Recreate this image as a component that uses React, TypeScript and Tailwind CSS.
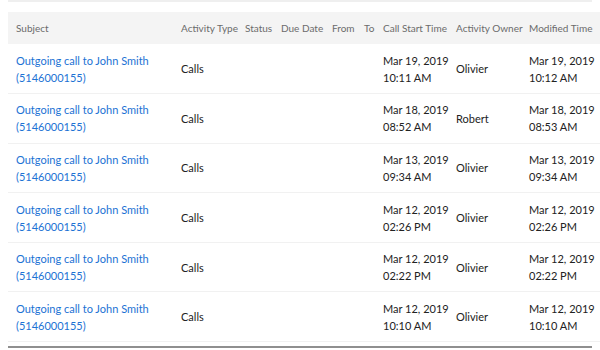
const rows = [
  { start: ["Mar 19, 2019", "10:11 AM"], owner: "Olivier", mod: ["Mar 19, 2019", "10:12 AM"] },
  { start: ["Mar 18, 2019", "08:52 AM"], owner: "Robert", mod: ["Mar 18, 2019", "08:53 AM"] },
  { start: ["Mar 13, 2019", "09:34 AM"], owner: "Olivier", mod: ["Mar 13, 2019", "09:34 AM"] },
  { start: ["Mar 12, 2019", "02:26 PM"], owner: "Olivier", mod: ["Mar 12, 2019", "02:26 PM"] },
  { start: ["Mar 12, 2019", "02:22 PM"], owner: "Olivier", mod: ["Mar 12, 2019", "02:22 PM"] },
  { start: ["Mar 12, 2019", "10:10 AM"], owner: "Olivier", mod: ["Mar 12, 2019", "10:10 AM"] },
];

const cols = [
  { label: "Subject", w: "w-[165px]" },
  { label: "Activity Type", w: "w-[64px]" },
  { label: "Status", w: "w-[36px]" },
  { label: "Due Date", w: "w-[51px]" },
  { label: "From", w: "w-[32px]" },
  { label: "To", w: "w-[19px]" },
  { label: "Call Start Time", w: "w-[73px]" },
  { label: "Activity Owner", w: "w-[73px]" },
  { label: "Modified Time", w: "w-[79px]" },
];

export default function App() {
  return (
    <div className="h-[350px] w-[600px] overflow-hidden bg-white font-['Lato',sans-serif] text-[11px] leading-[17px]">
      <div className="mx-2 h-[2px] bg-[#efefef]" />
      <div className="ml-2 mt-[10px] w-[592px]">
        <table className="w-[592px] table-fixed border-collapse">
          <thead>
            <tr className="h-[32px] bg-[#f4f4f4]">
              {cols.map((c) => (
                <th key={c.label} className={`${c.w} whitespace-nowrap pl-2 text-left text-[10px] font-normal text-[#6b6b6b]`}>
                  {c.label}
                </th>
              ))}
            </tr>
          </thead>
          <tbody>
            {rows.map((r, i) => (
              <tr key={i} className="h-[49.6px] border-b border-[#f1f1f1] text-[#222]">
                <td className="pl-2 text-[#1c72d4]">
                  Outgoing call to John Smith
                  <br />
                  (5146000155)
                </td>
                <td className="pl-2">Calls</td>
                <td />
                <td />
                <td />
                <td />
                <td className="whitespace-nowrap pl-2">
                  {r.start[0]}
                  <br />
                  {r.start[1]}
                </td>
                <td className="pl-2">{r.owner}</td>
                <td className="whitespace-nowrap pl-2">
                  {r.mod[0]}
                  <br />
                  {r.mod[1]}
                </td>
              </tr>
            ))}
          </tbody>
        </table>
        <div className="mt-[4px] h-[2px] w-[584px] bg-[#8f8f8f]" />
      </div>
    </div>
  );
}
